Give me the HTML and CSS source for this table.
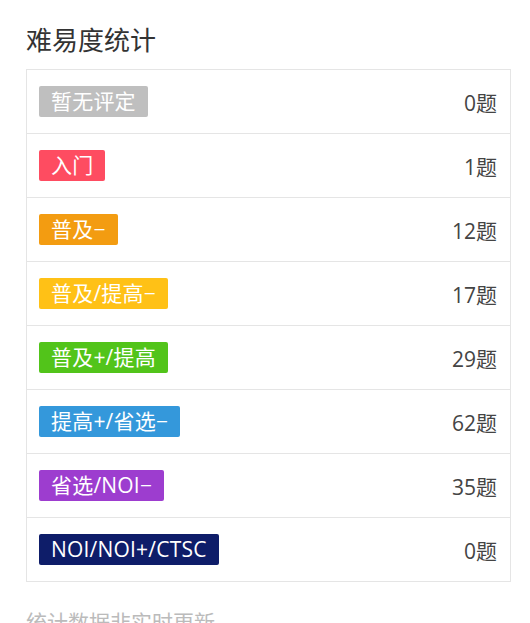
FILE: index.html
```html
<!DOCTYPE html>
<html lang="zh">
<head>
<meta charset="utf-8">
<link rel="stylesheet" href="styles.css">
</head>
<body>
<div class="panel">
  <h2 class="title">难易度统计</h2>
  <div class="table">
    <div class="row"><span class="badge gray">暂无评定</span><span class="count">0题</span></div>
    <div class="row"><span class="badge red">入门</span><span class="count">1题</span></div>
    <div class="row"><span class="badge orange">普及−</span><span class="count">12题</span></div>
    <div class="row"><span class="badge yellow">普及/提高−</span><span class="count">17题</span></div>
    <div class="row"><span class="badge green">普及+/提高</span><span class="count">29题</span></div>
    <div class="row"><span class="badge blue">提高+/省选−</span><span class="count">62题</span></div>
    <div class="row"><span class="badge purple">省选/NOI−</span><span class="count">35题</span></div>
    <div class="row"><span class="badge navy">NOI/NOI+/CTSC</span><span class="count">0题</span></div>
  </div>
  <p class="note">统计数据非实时更新</p>
</div>
</body>
</html>
```
FILE: styles.css
```css
html, body {
  margin: 0;
  padding: 0;
  background: #fff;
}
body {
  font-family: "Open Sans", "Noto Sans CJK SC", sans-serif;
  color: #333;
}
.panel {
  width: 485px;
  margin-left: 26px;
  padding-top: 22px;
}
.title {
  margin: 0 0 10px 0;
  font-size: 26px;
  font-weight: normal;
  line-height: 37px;
  color: #333;
}
.table {
  border: 1px solid #e5e5e5;
}
.row {
  display: flex;
  justify-content: space-between;
  align-items: center;
  height: 63px;
  padding: 0 13px 0 12px;
  border-top: 1px solid #e5e5e5;
}
.row:first-child {
  border-top: none;
}
.badge {
  display: inline-block;
  height: 31px;
  line-height: 31px;
  padding: 0 12px;
  border-radius: 2px;
  color: #fff;
  font-size: 21px;
  letter-spacing: 0.2px;
}
.count {
  font-size: 21px;
  color: #444;
}
.gray { background: #bfbfbf; }
.red { background: #fe4c61; }
.orange { background: #f39c11; }
.yellow { background: #ffc116; }
.green { background: #52c41a; }
.blue { background: #3498db; }
.purple { background: #9d3dcf; }
.navy { background: #0e1d69; }
.note {
  margin: 24px 0 0 0;
  font-size: 21px;
  color: #bbb;
}
```
